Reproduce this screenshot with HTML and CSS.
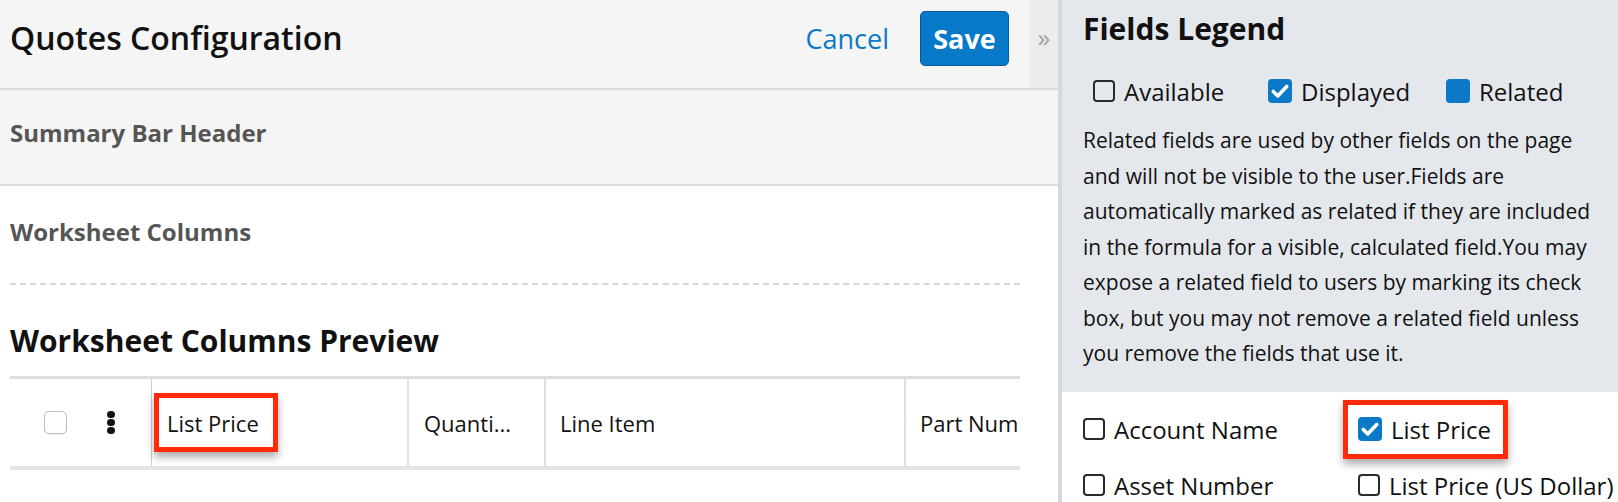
FILE: index.html
```html
<!DOCTYPE html>
<html lang="en">
<head>
  <meta charset="UTF-8">
  <title>Quotes Configuration</title>
  <link rel="stylesheet" href="styles.css">
</head>
<body>
  <div class="page">
    <main class="main">
      <header class="topbar">
        <div class="topbar-main">
          <h1>Quotes Configuration</h1>
          <a class="cancel" href="#">Cancel</a>
          <button class="save" type="button">Save</button>
        </div>
        <div class="toggle">&raquo;</div>
      </header>

      <section class="summary">
        <h2>Summary Bar Header</h2>
      </section>

      <section class="worksheet">
        <h2>Worksheet Columns</h2>
      </section>

      <section class="preview">
        <h3>Worksheet Columns Preview</h3>
        <div class="grid-head">
          <div class="cell cell-select">
            <span class="box-plain"></span>
            <span class="kebab"><i></i><i></i><i></i></span>
          </div>
          <div class="cell cell-price"><span class="callout">List Price</span></div>
          <div class="cell cell-qty">Quanti...</div>
          <div class="cell cell-item">Line Item</div>
          <div class="cell cell-part">Part Num</div>
        </div>
      </section>
    </main>

    <aside class="legend">
      <div class="legend-info">
        <h2>Fields Legend</h2>
        <div class="legend-keys">
          <span class="key"><span class="check"></span>Available</span>
          <span class="key"><span class="check checked"><svg viewBox="0 0 16 16"><path d="M3.5 8.3l3 3 6-6.3" /></svg></span>Displayed</span>
          <span class="key"><span class="check related"></span>Related</span>
        </div>
        <p>Related fields are used by other fields on the page and will not be visible to the user.Fields are automatically marked as related if they are included in the formula for a visible, calculated field.You may expose a related field to users by marking its check box, but you may not remove a related field unless you remove the fields that use it.</p>
      </div>
      <div class="field-list">
        <span class="key"><span class="check"></span>Account Name</span>
        <span class="key callout"><span class="check checked"><svg viewBox="0 0 16 16"><path d="M3.5 8.3l3 3 6-6.3" /></svg></span>List Price</span>
        <span class="key"><span class="check"></span>Asset Number</span>
        <span class="key"><span class="check"></span>List Price (US Dollar)</span>
      </div>
    </aside>
  </div>
</body>
</html>
```

FILE: styles.css
```css
* { box-sizing: border-box; }
body { margin: 0; font-family: "Open Sans", Arial, sans-serif; color: #111; background: #fff; }
.page { display: flex; height: 502px; overflow: hidden; }

/* left column */
.main { width: 1058px; flex: none; }
.topbar { display: flex; height: 90px; background: #f5f5f5; border-bottom: 2px solid #dcdcdc; }
.topbar-main { flex: 1; display: flex; align-items: center; padding: 0 21px 12px 10px; }
.topbar h1 { flex: 1; margin: 0; font-size: 32px; font-weight: 600; line-height: 40px; color: #111; }
.cancel { margin-right: 31px; font-size: 27px; color: #0b78c8; text-decoration: none; }
.save { width: 89px; height: 55px; padding: 0; border: 1px solid #0a5c9c; border-radius: 5px; background: #0679c8; color: #fff; font-family: inherit; font-size: 27px; font-weight: 700; }
.toggle { width: 28px; background: #ececec; color: #9ba1a7; font-size: 26px; line-height: 1; text-align: center; padding-top: 24px; }

.summary { height: 96px; display: flex; align-items: center; padding: 0 10px 10px; background: #f5f5f5; border-bottom: 2px solid #dcdcdc; }
.summary h2, .worksheet h2 { margin: 0; font-size: 24px; font-weight: 700; color: #555; }
.worksheet { height: 99px; display: flex; align-items: center; margin: 0 38px 0 10px; padding-bottom: 7px; border-bottom: 2px dashed #d6d6d6; }

.preview { padding: 0 38px 0 10px; }
.preview h3 { margin: 36px 0 15px; font-size: 30px; font-weight: 700; line-height: 40px; }
.grid-head { display: flex; height: 94px; border-top: 3px solid #dedede; border-bottom: 4px solid #e4e4e4; overflow: hidden; font-size: 22px; }
.cell { display: flex; align-items: center; flex: none; padding-left: 15px; border-left: 2px solid #e0e0e0; white-space: nowrap; }
.cell-select { width: 142px; padding-left: 34px; border-left: none; border-right: 1px solid #cfcfcf; }
.cell-price { width: 255px; border-left: none; }
.cell-qty { width: 137px; }
.cell-item { width: 360px; padding-left: 14px; }
.cell-part { flex: 1; padding-left: 14px; }
.box-plain { width: 23px; height: 23px; border: 1px solid #bdbdbd; border-radius: 5px; background: #fff; box-shadow: 0 1px 1px #0001; }
.kebab { display: flex; flex-direction: column; gap: 1px; margin-left: 40px; }
.kebab i { width: 8px; height: 7px; border-radius: 4px; background: #111; }

/* red annotation frames */
.callout { position: relative; display: inline-flex; align-items: center; height: 30px; }
.callout::after { content: ""; position: absolute; top: -15px; bottom: -14px; left: -13px; right: -19px; border: 5px solid #ff2a0a; box-shadow: 0 5px 8px #0005; }

/* right column */
.legend { flex: 1; min-width: 0; display: flex; flex-direction: column; border-left: 4px solid #d6d9dc; }
.legend-info { flex: none; height: 392px; padding: 0 20px 0 21px; background: #e4e8ec; }
.legend-info h2 { margin: 9px 0 0; font-size: 30px; font-weight: 700; line-height: 40px; }
.legend-keys { display: grid; grid-template-columns: 175px 178px auto; height: 40px; margin-top: 22px; padding-left: 10px; }
.legend-info p { margin: 12px 0 0; font-size: 21px; line-height: 35.5px; color: #111; }
.key { display: inline-flex; align-items: center; gap: 9px; font-size: 24px; color: #111; white-space: nowrap; }
.check { width: 22px; height: 22px; flex: none; border: 2px solid #2a2a2a; border-radius: 4px; }
.check.checked, .check.related { border: none; background: #0b78c8; width: 24px; height: 24px; }
.check svg { display: block; width: 24px; height: 24px; fill: none; stroke: #fff; stroke-width: 2.4; stroke-linecap: round; stroke-linejoin: round; }

.field-list { display: grid; grid-template-columns: 275px 1fr; grid-auto-rows: 56px; align-items: center; justify-items: start; padding: 9px 0 0 21px; }
.field-list .callout { height: 30px; }
.field-list .callout::after { top: -14px; bottom: -15px; left: -15px; right: -17px; }
```
